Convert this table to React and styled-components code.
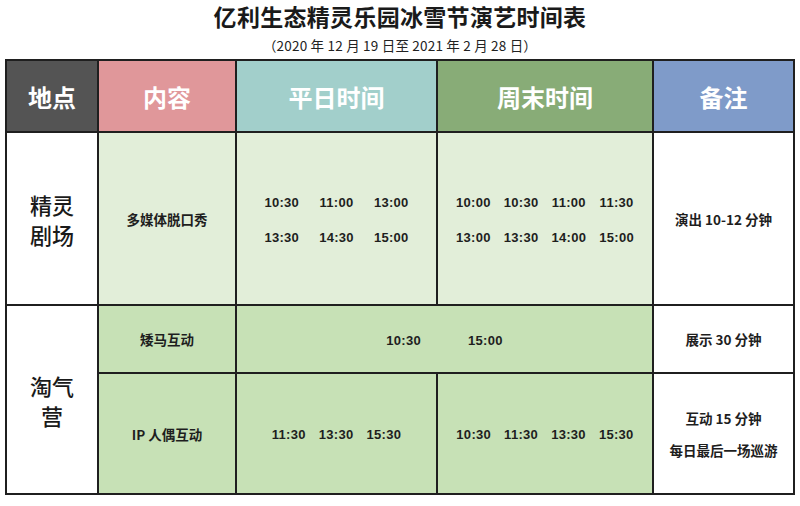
import React from 'react';
import styled, { createGlobalStyle } from 'styled-components';

const GlobalStyle = createGlobalStyle`
  html, body {
    margin: 0;
    padding: 0;
    background: #ffffff;
  }
  body {
    font-family: "Noto Sans CJK SC", "Noto Sans", sans-serif;
    color: #1e1e1e;
  }
`;

const Page = styled.div`
  width: 800px;
  height: 506px;
  overflow: hidden;
  display: flex;
  flex-direction: column;
  align-items: flex-start;
`;

const Title = styled.h1`
  align-self: stretch;
  margin: 0;
  padding-top: 2px;
  line-height: 29px;
  text-align: center;
  font-size: 23px;
  font-weight: 700;
  color: #1a1a1a;
  letter-spacing: 0.3px;
`;

const Subtitle = styled.div`
  align-self: stretch;
  height: 28px;
  line-height: 28px;
  text-align: center;
  font-size: 13.5px;
  color: #222;
  letter-spacing: 0.2px;
`;

const Table = styled.table`
  margin-left: 5px;
  width: 788px;
  border-collapse: collapse;
  table-layout: fixed;
  border: 2px solid #1f1f1f;
`;

const Th = styled.th`
  height: 70px;
  padding: 0;
  background: ${p => p.$bg};
  color: #ffffff;
  font-size: 24px;
  font-weight: 700;
  border: 2px solid #1f1f1f;
  text-align: center;
  vertical-align: middle;
`;

const Td = styled.td`
  height: ${p => p.$h}px;
  padding: 0;
  background: ${p => p.$bg || '#ffffff'};
  border: 2px solid #1f1f1f;
  text-align: center;
  vertical-align: middle;
  font-size: 13.5px;
  font-weight: 700;
  color: #1e1e1e;
`;

const Place = styled.div`
  font-size: 22px;
  font-weight: 500;
  line-height: 30px;
  color: #1a1a1a;
`;

const Times = styled.div`
  display: inline-grid;
  grid-template-columns: repeat(${p => p.$cols}, auto);
  column-gap: ${p => p.$gap}px;
  row-gap: 16px;
  font-family: "Liberation Sans", "DejaVu Sans", sans-serif;
  font-size: 13px;
  font-weight: 700;
  line-height: 19px;
  color: #1e1e1e;
  letter-spacing: 0.3px;
`;

const Note = styled.div`
  line-height: 32px;
`;

const LIGHT = '#e2eed9';
const MID = '#c7e1b6';

function TimeGrid({ cols, gap, items }) {
  return (
    <Times $cols={cols} $gap={gap}>
      {items.map((t, i) => <span key={i}>{t}</span>)}
    </Times>
  );
}

export default function App() {
  return (
    <Page>
      <GlobalStyle />
      <Title>亿利生态精灵乐园冰雪节演艺时间表</Title>
      <Subtitle>（2020 年 12 月 19 日至 2021 年 2 月 28 日）</Subtitle>
      <Table>
        <colgroup>
          <col style={{ width: 92 }} />
          <col style={{ width: 138 }} />
          <col style={{ width: 201 }} />
          <col style={{ width: 216 }} />
          <col style={{ width: 141 }} />
        </colgroup>
        <thead>
          <tr>
            <Th $bg="#545454">地点</Th>
            <Th $bg="#e0979a">内容</Th>
            <Th $bg="#a2cfcb">平日时间</Th>
            <Th $bg="#88ac77">周末时间</Th>
            <Th $bg="#7f9bc9">备注</Th>
          </tr>
        </thead>
        <tbody>
          <tr>
            <Td $h={171}>
              <Place>精灵<br />剧场</Place>
            </Td>
            <Td $h={171} $bg={LIGHT}>多媒体脱口秀</Td>
            <Td $h={171} $bg={LIGHT}>
              <TimeGrid cols={3} gap={20} items={['10:30', '11:00', '13:00', '13:30', '14:30', '15:00']} />
            </Td>
            <Td $h={171} $bg={LIGHT}>
              <TimeGrid cols={4} gap={13} items={['10:00', '10:30', '11:00', '11:30', '13:00', '13:30', '14:00', '15:00']} />
            </Td>
            <Td $h={171}>演出 10-12 分钟</Td>
          </tr>
          <tr>
            <Td $h={66} rowSpan={2}>
              <Place>淘气<br />营</Place>
            </Td>
            <Td $h={66} $bg={MID}>矮马互动</Td>
            <Td $h={66} $bg={MID} colSpan={2}>
              <TimeGrid cols={2} gap={47} items={['10:30', '15:00']} />
            </Td>
            <Td $h={66}>展示 30 分钟</Td>
          </tr>
          <tr>
            <Td $h={119} $bg={MID}>IP 人偶互动</Td>
            <Td $h={119} $bg={MID}>
              <TimeGrid cols={3} gap={13} items={['11:30', '13:30', '15:30']} />
            </Td>
            <Td $h={119} $bg={MID}>
              <TimeGrid cols={4} gap={13} items={['10:30', '11:30', '13:30', '15:30']} />
            </Td>
            <Td $h={119}>
              <Note>互动 15 分钟</Note>
              <Note>每日最后一场巡游</Note>
            </Td>
          </tr>
        </tbody>
      </Table>
    </Page>
  );
}
